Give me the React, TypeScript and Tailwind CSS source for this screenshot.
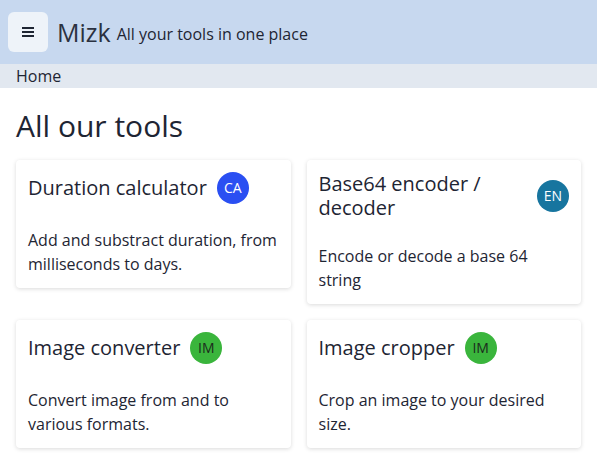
const TOOLS = [
  {
    title: "Duration calculator",
    tag: "CA",
    badge: "bg-[#2a4ff2] text-white",
    desc: "Add and substract duration, from milliseconds to days.",
  },
  {
    title: "Base64 encoder / decoder",
    tag: "EN",
    badge: "bg-[#17759f] text-white",
    desc: "Encode or decode a base 64 string",
  },
  {
    title: "Image converter",
    tag: "IM",
    badge: "bg-[#3ab53c] text-[#1c2a1c]",
    desc: "Convert image from and to various formats.",
  },
  {
    title: "Image cropper",
    tag: "IM",
    badge: "bg-[#3ab53c] text-[#1c2a1c]",
    desc: "Crop an image to your desired size.",
  },
];

export default function App() {
  return (
    <div className="min-h-screen bg-white text-[#1e2533]" style={{ fontFamily: "'Open Sans', Lato, sans-serif" }}>
      <header className="flex h-16 items-center bg-[#c7d8ef] px-2">
        <button className="flex h-10 w-10 items-center justify-center rounded-md bg-[#eef3f9]">
          <svg viewBox="0 0 12 12" className="h-3 w-3" fill="none" stroke="#1e2533" strokeWidth="2" aria-hidden="true">
            <path d="M0 2h12M0 6h12M0 10h12" />
          </svg>
        </button>
        <span className="ml-[9px] text-[25px] leading-8 text-[#2b3140]">Mizk</span>
        <span className="ml-1.5 mt-1 text-base">All your tools in one place</span>
      </header>

      <nav className="flex h-6 items-center bg-[#e2e8f0] px-4 text-base">Home</nav>

      <main className="px-4 pt-5">
        <h1 className="text-[30px] leading-9">All our tools</h1>
        <div className="mt-4 grid grid-cols-2 items-start gap-4">
          {TOOLS.map((t) => (
            <div key={t.title} className="rounded bg-white p-3 shadow-[0_1px_4px_rgba(0,0,0,0.15)]">
              <div className="flex items-center gap-2.5">
                <h2 className="text-xl leading-6">{t.title}</h2>
                <span className={`flex h-8 w-8 shrink-0 items-center justify-center rounded-full text-sm ${t.badge}`}>
                  {t.tag}
                </span>
              </div>
              <p className="mt-6 text-base leading-6">{t.desc}</p>
            </div>
          ))}
        </div>
      </main>
    </div>
  );
}
